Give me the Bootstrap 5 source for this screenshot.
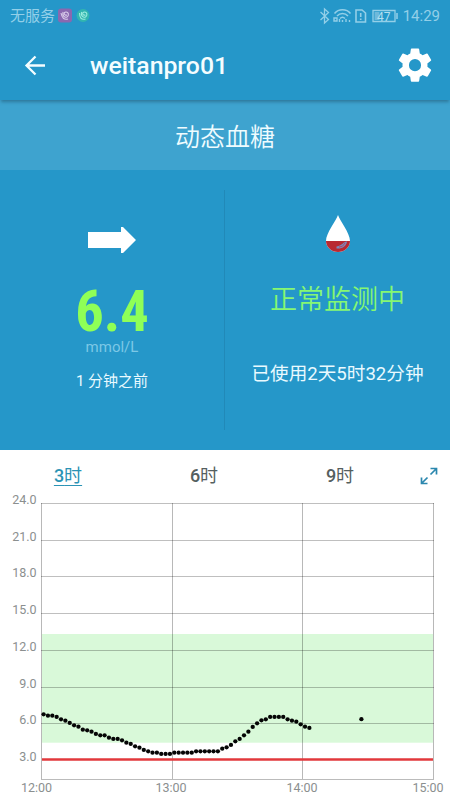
<!DOCTYPE html>
<html lang="zh-CN">
<head>
<meta charset="utf-8">
<meta name="viewport" content="width=device-width, initial-scale=1">
<title>动态血糖</title>
<link href="https://cdn.jsdelivr.net/npm/bootstrap@5.3.0/dist/css/bootstrap.min.css" rel="stylesheet">
<style>
body{font-family:Roboto,"Noto Sans CJK SC",sans-serif;width:450px;height:800px;overflow:hidden;background:#fff;line-height:1}
.app-blue{background:#2597c9}
.status{height:31px;color:#93cfe8;font-size:15px;padding:1px 10px 0}
.appbar{height:69px;padding:0 18px 0 24px;box-shadow:0 3px 3px -1px rgba(30,80,105,.5);position:relative}
.appbar h1{font-size:24.800px;font-weight:500;margin:0 0 0 44px;color:#f4fdff}
.strip{height:70px;background:#3ea3cf;color:#effcff;font-size:25px;font-weight:350;padding-top:4px}
.summary{height:280px;color:#e9faff}
.pane{width:225px}
.divide{height:240px;border-right:1px solid #2189b8}
.reading{font-family:"Roboto Condensed",Roboto,sans-serif;font-size:56.500px;font-weight:700;color:#8fff57;line-height:48px;height:48px;margin-top:35px}
.unit{font-size:15px;color:#7cc8e6;height:15px;margin-top:4px}
.ago{font-size:15px;margin-top:19px}
.state{font-size:27px;font-weight:350;color:#86f772;margin-top:34px}
.used{font-size:18.600px;margin-top:51px}
.ranges{height:42px;font-size:18px;font-weight:500;color:#55605f;padding:9px 12px 0 0}
.ranges .cell{width:136px}
.ranges .cell span{font-weight:400}
.ranges .on{color:#2b93b5;text-decoration:underline;text-underline-offset:3px;text-decoration-thickness:1px}
svg{display:block;flex:none}
</style>
<script src="https://cdn.jsdelivr.net/npm/bootstrap@5.3.0/dist/js/bootstrap.bundle.min.js"></script>
</head>
<body>
<header class="app-blue">
  <div class="status d-flex align-items-center">
    <span>无服务</span>
    <svg width="34" height="16" viewBox="0 0 34 16" style="margin-left:3px">
      <rect x="0" y="0.500" width="14" height="14" rx="3" fill="#8a68b0"/>
      <path d="M3 5c1 5 3 7 7 6M5 4c-1 4 2 6 4 5s2-5-1-5-2 4 1 3" fill="none" stroke="#d9cdea" stroke-width="1.100"/>
      <circle cx="25" cy="7.500" r="6.500" fill="#31b5b0"/>
      <path d="M21.500 5c0 5 2 7 6 6M23.500 4c-1 4 2 6 4 5s2-5-1-5-2 4 1 3" fill="none" stroke="#9cecdf" stroke-width="1.100"/>
    </svg>
    <svg class="ms-auto" width="80" height="18" viewBox="319.500 6.500 80 18" fill="none" stroke="#93cfe8" stroke-width="1.300">
      <path d="M321 11.500l8 7.500-4 3.500V8.500l4 3.500-8 7.500"/>
      <path d="M335 13c4-5 12-5 16 0M337.500 15.500c3-3.500 8-3.500 11 0M340.500 18c1.500-1.500 3.500-1.500 5 0" stroke-width="1.500"/>
      <path d="M334.500 17.500h3v3h-3zM340 21.500v-3M343 21.500v-2M346.500 21.500v-3M350 21.500v-2" stroke-width="1.400"/>
      <path d="M356.500 9.500h6l3.500 3v9h-9.500zM361.200 12.500v4M361.200 18v1.600" stroke-width="1.600"/>
      <path d="M373.500 10h22v11h-22z"/><path d="M375 11.500h5v8h-5z" fill="#6fb9da" stroke="none"/><path d="M397.500 12.500v6" stroke-width="1.500"/>
      <text x="377.500" y="20" font-size="12" fill="#b2dff0" stroke="none">47</text>
    </svg>
    <span class="ms-1">14:29</span>
  </div>
  <div class="appbar d-flex align-items-center">
    <svg width="22" height="22" viewBox="0 0 22 22" fill="none" stroke="#f4fdff" stroke-width="2.300"><path d="M21 10.500H3M11.500 1.500l-9 9 9 9"/></svg>
    <h1>weitanpro01</h1>
    <svg class="ms-auto" width="34" height="35" viewBox="2.200 2.200 19.600 20" fill="#fff"><path d="M19.140 12.940c.04-.3.060-.61.060-.94s-.02-.64-.07-.94l2.030-1.580a.49.49 0 0 0 .12-.61l-1.920-3.320a.49.49 0 0 0-.59-.22l-2.390.96a7 7 0 0 0-1.620-.94l-.36-2.540a.48.48 0 0 0-.48-.41h-3.840a.47.47 0 0 0-.47.41l-.36 2.540c-.59.24-1.130.57-1.620.94l-2.390-.96a.48.48 0 0 0-.59.22L2.740 8.870a.47.47 0 0 0 .12.610l2.030 1.580c-.05.3-.09.63-.09.94s.02.640.07.940l-2.030 1.580a.49.49 0 0 0-.12.610l1.920 3.320c.12.220.370.290.590.220l2.390-.96c.5.380 1.030.7 1.620.940l.36 2.540c.05.240.240.410.480.410h3.840c.24 0 .44-.17.470-.41l.36-2.540a6.600 6.600 0 0 0 1.620-.94l2.390.96c.22.080.470 0 .590-.22l1.920-3.320a.47.47 0 0 0-.12-.61zM12 15.500a3.500 3.500 0 1 1 0-7 3.500 3.500 0 0 1 0 7z"/></svg>
  </div>
</header>
<div class="strip d-flex align-items-center justify-content-center">动态血糖</div>
<section class="summary app-blue d-flex align-items-center">
  <div class="pane divide d-flex flex-column align-items-center">
    <svg width="50" height="26" viewBox="0 0 50 26" style="margin-top:37px"><path d="M1 5h33V0h2l13 13-13 13h-2v-5H1z" fill="#fff"/></svg>
    <div class="reading">6.4</div>
    <div class="unit">mmol/L</div>
    <div class="ago">1 分钟之前</div>
  </div>
  <div class="pane divide border-0 d-flex flex-column align-items-center">
    <svg width="26" height="38" viewBox="0 0 26 38" style="margin-top:25px"><path d="M13 0C11 6 1 18 1 26a12 11 0 0 0 24 0C25 18 15 6 13 0z" fill="#fff"/><path d="M1 26h24a12 11 0 0 1-24 0z" fill="#b92832"/><path d="M11.500 33.500c6 .5 10-2.500 10.500-7-4 0-4 4-10.500 5z" fill="#778bc0"/><path d="M14 32c3 0 5-2 6-4" stroke="#c04058" fill="none"/></svg>
    <div class="state">正常监测中</div>
    <div class="used text-nowrap">已使用2天5时32分钟</div>
  </div>
</section>
<nav class="ranges d-flex align-items-center">
  <div class="cell text-center on">3<span>时</span></div><div class="cell text-center">6<span>时</span></div><div class="cell text-center">9<span>时</span></div>
  <svg width="18" height="18" viewBox="0 0 18 18" class="ms-auto" fill="none" stroke="#2b87ae" stroke-width="1.700"><path d="M10.500 1.500h6v6M16.500 1.500l-6 6M1.500 10.500v6h6M1.500 16.500l6-6"/></svg>
</nav>
<svg id="chart" width="450" height="308" viewBox="0 492 450 308" font-size="12.500" fill="#8b8f8f"></svg>
<script>
const out = [];
out.push('<rect x="42" y="634" width="391" height="108.700" fill="#d9f9d9"/>');
for (let i = 0; i < 8; i++) {
  const y = Math.round(503 + i * 36.7) + .5;
  if (i < 7) out.push(`<path d="M41 ${y}H434" stroke="#000" stroke-opacity=".25"/>`);
  out.push(`<text x="36.500" y="${y + .7}" text-anchor="end">${(24 - i * 3).toFixed(1)}</text>`);
}
out.push('<path d="M41 779.500H434" stroke="#bbb"/>');
[41.5, 172.5, 302.5, 433.5].forEach((x, i) => {
  out.push(`<path d="M${x} 503V779" stroke="#000" stroke-opacity=".28"/>`);
  out.push(`<text x="${[36.500, 171, 302, 428][i]}" y="791.500" text-anchor="middle">${12 + i}:00</text>`);
});
out.push('<path d="M42 759.500H433" stroke="#e2383c" stroke-width="2.400"/>');
const levels = [282,286,286,290,297,301,308,315,319,328,330,334,341,345,345,352,356,356,360,367,371,378,382,389,393,397,397,401,401,401,397,397,397,397,397,393,393,393,393,393,393,385,381,374,363,356,345,334,320,309,300,297,290,290,290,290,297,301,304,312,319,323];
const dot = (x, y) => out.push(`<circle cx="${x}" cy="${y}" r="2.150" fill="#050505"/>`);
levels.forEach((v, i) => dot(43.6 + i * 4.357, 620.3 + v / 3));
dot(361.4, 719.2);
document.getElementById('chart').innerHTML = out.join('');
</script>
</body>
</html>
